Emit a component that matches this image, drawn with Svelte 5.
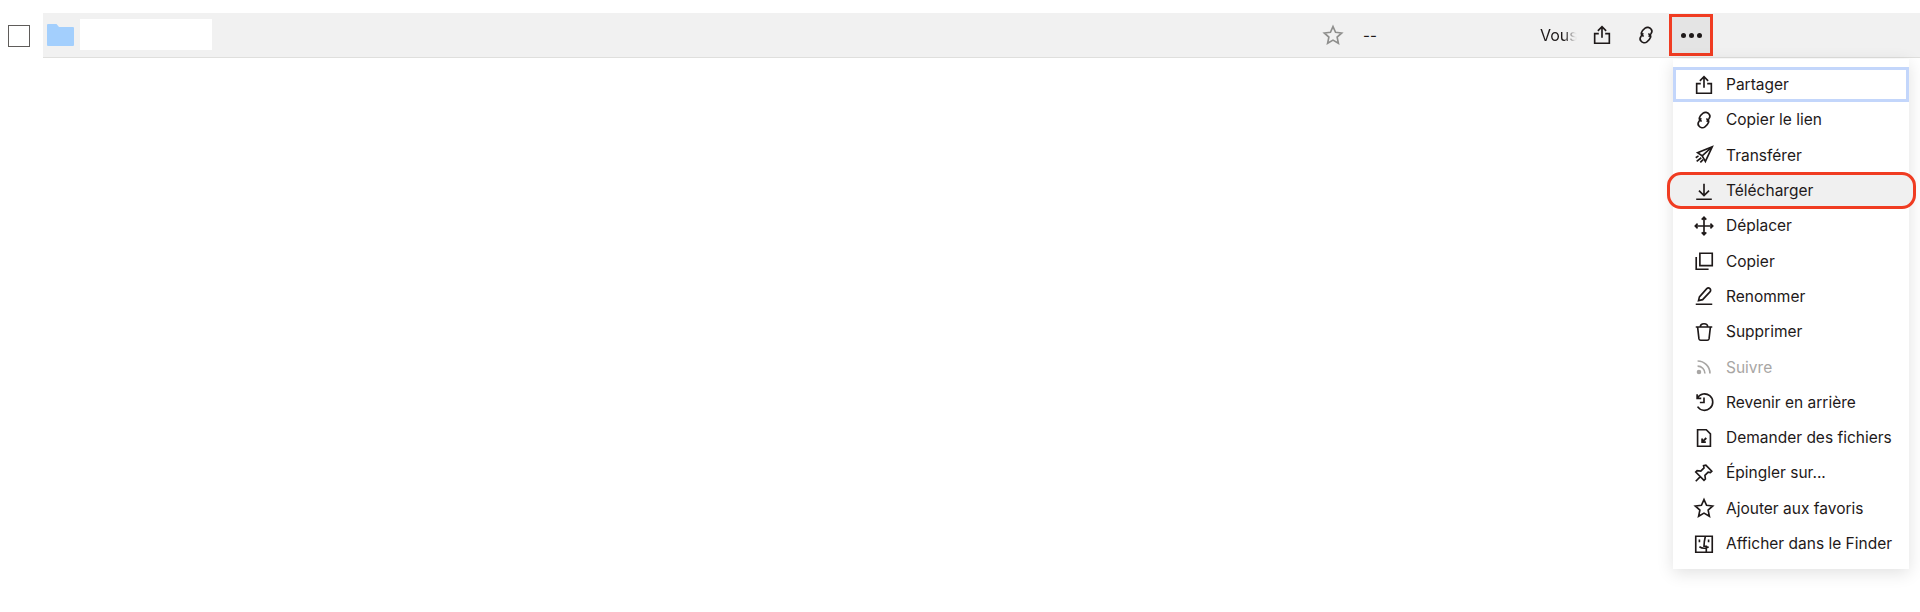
<script>
  const items = [
    { label: 'Partager', icon: 'share', cls: 'focused' },
    { label: 'Copier le lien', icon: 'link' },
    { label: 'Transférer', icon: 'send' },
    { label: 'Télécharger', icon: 'download', cls: 'hot' },
    { label: 'Déplacer', icon: 'move' },
    { label: 'Copier', icon: 'copy' },
    { label: 'Renommer', icon: 'pencil' },
    { label: 'Supprimer', icon: 'trash' },
    { label: 'Suivre', icon: 'rss', cls: 'disabled' },
    { label: 'Revenir en arrière', icon: 'history' },
    { label: 'Demander des fichiers', icon: 'request' },
    { label: 'Épingler sur...', icon: 'pin' },
    { label: 'Ajouter aux favoris', icon: 'star' },
    { label: 'Afficher dans le Finder', icon: 'finder' }
  ];
</script>

{#snippet glyph(name)}
  <svg class="icon" viewBox="0 0 24 24" fill="none" stroke="currentColor" stroke-width="1.8">
    {#if name === 'share'}
      <path d="M12 15V3.5M7.5 7.5 12 3l4.500 4.500M8.500 10.500H4v10.500h16V10.500h-4.500" />
    {:else if name === 'link'}
      <path d="M9.500 13.500C7.500 12.500 6.500 11 7 9.500 7.500 8 9 6 11 4.500c2-1.500 5-1 6.500 1 1.500 1.500 1 3.500 0 5L15 14" />
      <path d="M14.500 10.500c2 1 3 2.500 2.500 4-.5 1.500-2 3.500-4 5-2 1.500-5 1-6.500-1-1.500-1.500-1-3.500 0-5L9 10" />
    {:else if name === 'send'}
      <path d="M21 3 5 9.500l5 3.500 3.500 6L21 3ZM10 13l11-10M9 15l-5 4M11 17l-3 3M6 13l-3 2" />
    {:else if name === 'download'}
      <path d="M12 4v12.500M6.500 11.500l5.500 5.500 5.500-5.500M3.500 21h17" />
    {:else if name === 'move'}
      <path d="M12 3v18M3 12h18M9.500 5 12 2.500 14.500 5M9.500 19l2.500 2.500 2.500-2.500M5 9.500 2.500 12 5 14.500M19 9.500l2.500 2.500-2.500 2.500" />
    {:else if name === 'copy'}
      <path d="M7.500 3.500h13.500v13.500H7.500zM3.500 7.500V21H17" />
    {:else if name === 'pencil'}
      <path d="M3 21h18M6 17l1-4 8-9c1-1 2.500-1 3.500 0s1 2.500 0 3.500l-8 8.500-4.500 1Z" />
    {:else if name === 'trash'}
      <path d="M3 6.500h18M5 6.500l1.500 13a2 2 0 0 0 2 1.500h7a2 2 0 0 0 2-1.500l1.500-13M8 6.500C8 4 9.500 3 12 3s4 1 4 3.500" />
    {:else if name === 'rss'}
      <path d="M5 11a8 8 0 0 1 8 8M5 5.500A13.500 13.500 0 0 1 18.500 19" />
      <circle cx="6.500" cy="17.500" r="2.500" fill="currentColor" stroke="none" />
    {:else if name === 'history'}
      <path d="M4.500 3.500v4.500H9M4.800 7.500A9 9 0 1 1 5 17M12 7v5.500H7.500" />
    {:else if name === 'request'}
      <path d="M5 3h9.500L19 7.500V21H5V3Z" />
      <path stroke-width="2" d="M14.500 12 10 16.500M10 12.500v4h4" />
    {:else if name === 'pin'}
      <path d="M14 3.500l6.500 6.500-1.500 1.500-2.500-.5-3.500 3.500.5 4-1.500 1.500-9-9 1.500-1.500 4 .5 3.500-3.500-.5-2.500ZM8 16l-5 5" />
    {:else if name === 'star'}
      <path d="m12 2.800 2.800 6.200 6.700.8-5 4.500 1.400 6.700-5.900-3.400L6.100 21l1.400-6.700-5-4.500 6.700-.8L12 2.800Z" />
    {:else if name === 'finder'}
      <path d="M3 3.500h18v17.500H3zM13.500 3.500c-1 4-1.500 8-1.500 11h2.500V21M7 7v3M17 7v3M7 15c3 2 7 2 10 0" />
    {/if}
  </svg>
{/snippet}

<main class="page">
  <div class="row">
    <div class="check-cell"><span class="check"></span></div>
    <div class="band">
      <svg class="folder" viewBox="0 0 27 22"><path fill="#a3cffd" d="M1 0h8.500l2.500 3h14a1 1 0 0 1 1 1v17a1 1 0 0 1-1 1H1a1 1 0 0 1-1-1V1a1 1 0 0 1 1-1Z" /></svg>
      <div class="name"></div>
      <div class="spacer"></div>
      <svg class="star" viewBox="0 0 24 24" fill="none" stroke="#8f8f8d" stroke-width="1.800"><path d="m12 2.800 2.800 6.200 6.700.8-5 4.500 1.400 6.700-5.900-3.400L6.100 21l1.400-6.700-5-4.500 6.700-.8L12 2.800Z" /></svg>
      <span class="dash">--</span>
      <span class="who">Vous</span>
      <span class="action first">{@render glyph('share')}</span>
      <span class="action second">{@render glyph('link')}</span>
      <span class="more"><i></i><i></i><i></i></span>
    </div>
  </div>

  <ul class="menu">
    {#each items as item}
      <li class={item.cls}>
        {@render glyph(item.icon)}
        <span>{item.label}</span>
      </li>
    {/each}
  </ul>
</main>

<style>
  :global(body) { margin: 0; background: #fff; }
  .page {
    position: relative;
    height: 612px;
    overflow: hidden;
    font-family: Inter, "Noto Sans", sans-serif;
    color: #1e1919;
  }
  .row { display: flex; padding-top: 13px; height: 45px; }
  .check-cell { width: 43px; display: flex; padding: 12px 0 0 8px; box-sizing: border-box; }
  .check { width: 22px; height: 22px; box-sizing: border-box; border: 1.5px solid #5f5c5a; background: #fff; }
  .band {
    flex: 1;
    display: flex;
    align-items: center;
    background: #f1f1f1;
    border-bottom: 1px solid #dfdfdd;
    padding-left: 4px;
  }
  .folder { width: 27px; height: 22px; flex: none; }
  .name { width: 132px; height: 31px; margin: 0 0 2px 6px; background: #fff; }
  .spacer { width: 1110px; }
  .star { width: 22px; height: 22px; flex: none; }
  .dash { font-size: 15px; width: 30px; margin-left: 19px; }
  .who {
    font-size: 16px;
    width: 37px;
    margin-left: 147px;
    color: transparent;
    background: linear-gradient(90deg, #1e1919 65%, #e8e8e8 95%);
    -webkit-background-clip: text;
    background-clip: text;
  }
  .action { display: flex; color: #1e1919; }
  .first { margin-left: 14px; }
  .second { margin-left: 22px; }
  .more {
    width: 44px;
    height: 42px;
    box-sizing: border-box;
    margin-left: 12px;
    border: 3px solid #f03c22;
    background: #e4e4e4;
    display: flex;
    align-items: center;
    justify-content: center;
    gap: 3px;
  }
  .more i { width: 5px; height: 5px; border-radius: 50%; background: #1e1919; }
  .icon { width: 22px; height: 22px; flex: none; }
  .menu {
    position: absolute;
    left: 1673px;
    top: 59px;
    width: 236px;
    height: 510px;
    margin: 0;
    padding: 8px 0;
    box-sizing: border-box;
    list-style: none;
    background: #fff;
    box-shadow: 0 4px 16px rgba(0, 0, 0, .12);
  }
  .menu li {
    position: relative;
    height: 35.3px;
    display: flex;
    align-items: center;
    gap: 11px;
    padding-left: 20px;
    font-size: 15.5px;
    box-sizing: border-box;
  }
  .focused { outline: 3px solid #c3d6fb; outline-offset: -3px; }
  .hot::before {
    content: "";
    position: absolute;
    inset: -1px -7px -1px -6px;
    background: #f0f0f0;
    border: 3px solid #f03c22;
    border-radius: 14px;
  }
  .hot > * { position: relative; }
  .disabled { color: #a8a6a4; }
</style>
